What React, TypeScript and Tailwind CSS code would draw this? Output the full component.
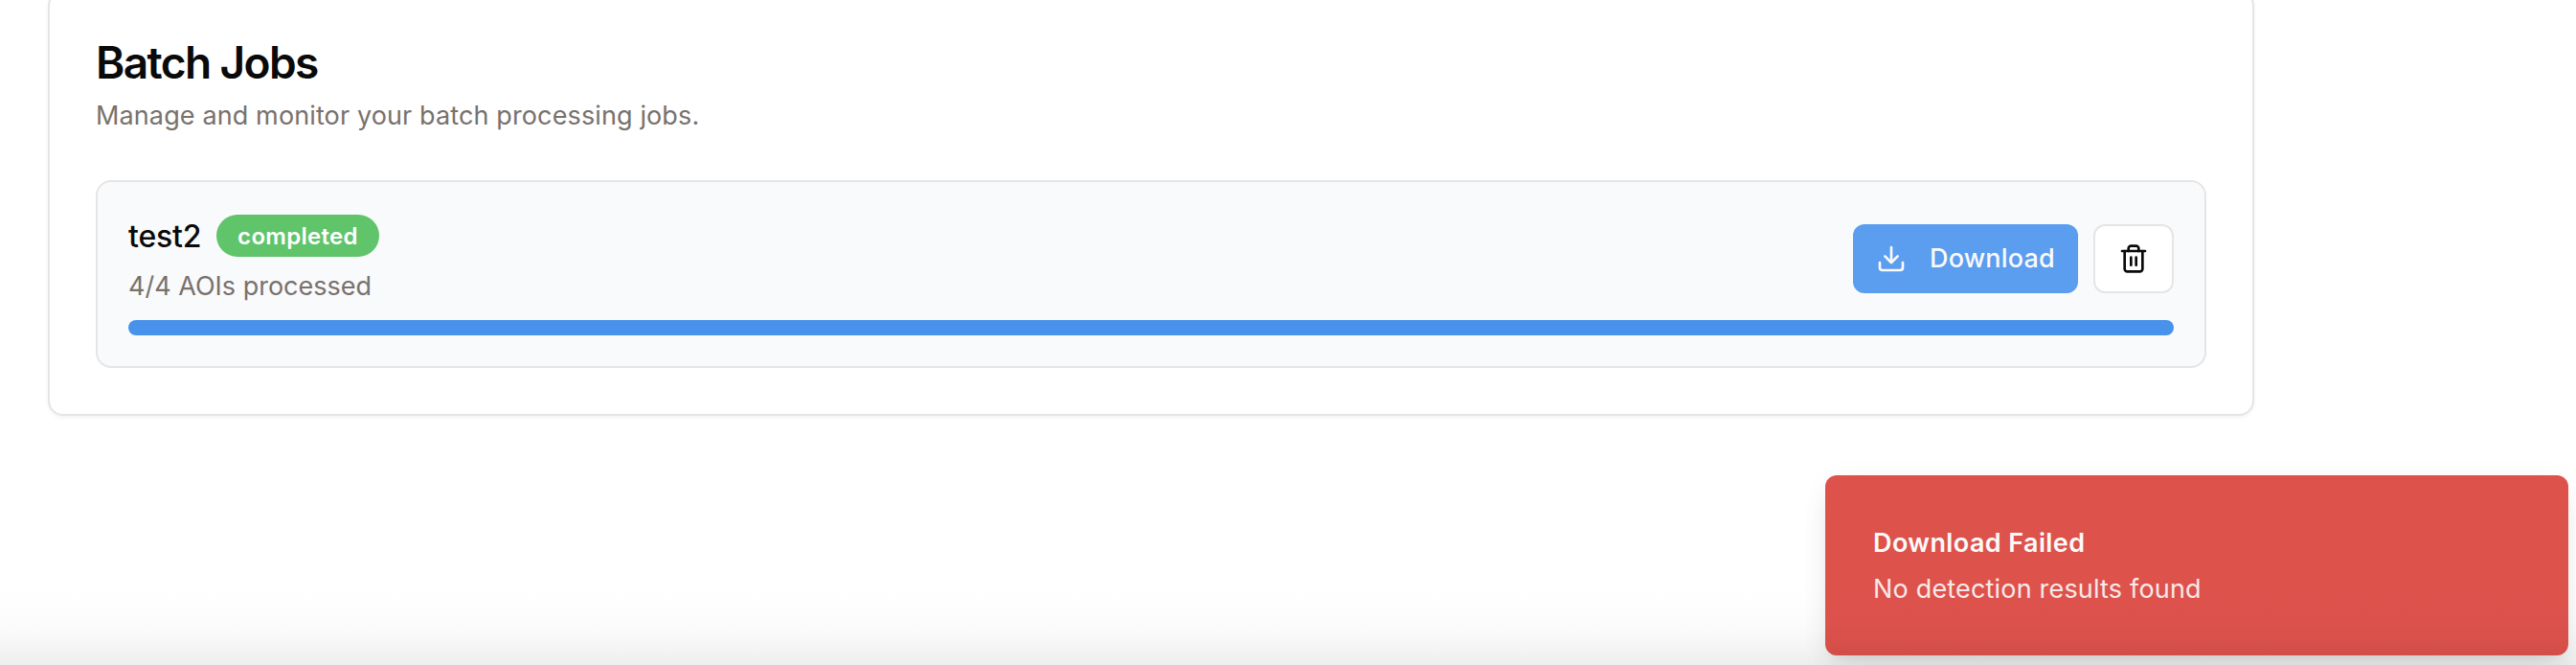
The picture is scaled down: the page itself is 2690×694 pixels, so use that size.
import React from "react";

function DownloadIcon() {
  return (
    <svg
      className="size-8 shrink-0"
      viewBox="0 0 24 24"
      fill="none"
      stroke="currentColor"
      strokeWidth={2}
      strokeLinecap="round"
      strokeLinejoin="round"
    >
      <path d="M21 15v4a2 2 0 0 1-2 2H5a2 2 0 0 1-2-2v-4" />
      <path d="M7 10l5 5 5-5" />
      <path d="M12 15V3" />
    </svg>
  );
}

function TrashIcon() {
  return (
    <svg
      className="size-8 shrink-0"
      viewBox="0 0 24 24"
      fill="none"
      stroke="currentColor"
      strokeWidth={2}
      strokeLinecap="round"
      strokeLinejoin="round"
    >
      <path d="M3 6h18" />
      <path d="M19 6v14c0 1-1 2-2 2H7c-1 0-2-1-2-2V6" />
      <path d="M8 6V4c0-1 1-2 2-2h4c1 0 2 1 2 2v2" />
      <path d="M10 11v6" />
      <path d="M14 11v6" />
    </svg>
  );
}

function JobCard() {
  return (
    <div className="rounded-2xl border-2 border-[#e5e5e5] bg-[#f9fafc] p-8">
      <div className="flex items-center justify-between">
        <div>
          <div className="flex h-12 items-center">
            <h3 className="w-[92px] pt-0.5 text-[32px] leading-[48px] font-medium tracking-[-0.2px] text-[#0a0a0a]">
              test2
            </h3>
            <span className="flex h-11 w-[170px] items-center justify-center rounded-full bg-[#5fc46a] pt-px text-[24px] font-semibold tracking-[0.3px] text-white">
              completed
            </span>
          </div>
          <p className="mt-2 h-10 text-[27px] leading-[42px] text-[#78716c]">
            4/4 AOIs processed
          </p>
        </div>
        <div className="flex gap-4">
          <button className="flex h-[72px] w-[235px] items-center rounded-xl bg-[#5b9dee] pl-6 text-[27px] font-[450] tracking-[0.2px] text-[#fafafa]">
            <DownloadIcon />
            <span className="ml-6 pt-px">Download</span>
          </button>
          <button className="flex h-[72px] w-[84px] items-center justify-center rounded-xl border-2 border-[#e5e5e5] bg-white text-[#0a0a0a]">
            <TrashIcon />
          </button>
        </div>
      </div>
      <div className="mt-4 h-4 rounded-full bg-[#4992eb]" />
    </div>
  );
}

function Toast() {
  return (
    <div className="absolute right-2 bottom-2.5 h-[188px] w-[776px] rounded-xl bg-[#de524c] px-[50px] pt-[51px] text-[27px] leading-10 text-[#fafafa] shadow-[0_20px_30px_-6px_rgba(0,0,0,0.1),0_8px_12px_-8px_rgba(0,0,0,0.06),0_4px_36px_rgba(0,0,0,0.03)]">
      <div className="font-semibold tracking-[0.4px]">Download Failed</div>
      <div className="mt-2 tracking-[0.18px] opacity-90">
        No detection results found
      </div>
    </div>
  );
}

export default function App() {
  return (
    <div className="relative h-[694px] w-full overflow-hidden bg-white font-['Inter',sans-serif]">
      <main className="-mt-2.5 ml-[50px] w-[2304px] rounded-2xl border-2 border-[#e5e5e5] bg-white p-12 shadow-[0_2px_4px_rgba(0,0,0,0.05)]">
        <h1 className="h-12 pt-px text-[46px] leading-[48px] font-semibold tracking-[-1.6px] text-[#0a0a0a]">
          Batch Jobs
        </h1>
        <p className="mt-3 mb-12 h-10 text-[27px] leading-[42px] tracking-[0.12px] text-[#78716c]">
          Manage and monitor your batch processing jobs.
        </p>
        <JobCard />
      </main>
      <Toast />
      <div className="pointer-events-none absolute inset-x-0 bottom-0 h-24 bg-[linear-gradient(to_bottom,rgba(0,0,0,0)_0%,rgba(0,0,0,0.004)_35%,rgba(0,0,0,0.018)_65%,rgba(0,0,0,0.065)_100%)]" />
    </div>
  );
}
